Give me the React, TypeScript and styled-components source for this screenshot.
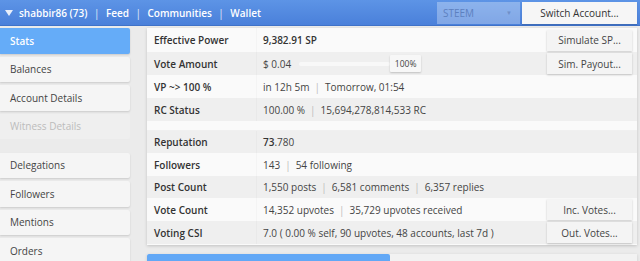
import React from "react";
import styled, { createGlobalStyle } from "styled-components";

const Global = createGlobalStyle`
  html, body { margin: 0; padding: 0; }
  body {
    background: #ebebeb;
    font-family: "Open Sans", "Liberation Sans", sans-serif;
    font-size: 10px;
    color: #333;
    overflow: hidden;
  }
`;

const Header = styled.header`
  height: 26px;
  box-sizing: border-box;
  display: flex;
  align-items: center;
  background: linear-gradient(#5d94e6, #4a80da);
  border-bottom: 1px solid #3f72c8;
  padding: 0 3px 0 4px;
  color: #fff;
`;

const Nav = styled.nav`
  display: flex;
  align-items: center;
  font-size: 10px;
  font-weight: 600;
  flex: 1;
`;

const Caret = styled.span`
  display: inline-block;
  width: 0;
  height: 0;
  border-left: 4.5px solid transparent;
  border-right: 4.5px solid transparent;
  border-top: 6px solid #e8eefa;
  margin: 1px 6px 0 1px;
`;

const Sep = styled.span`
  margin: 0 6.5px;
  font-weight: 400;
  opacity: 0.85;
`;

const Select = styled.div`
  width: 83px;
  height: 22px;
  box-sizing: border-box;
  display: flex;
  align-items: center;
  justify-content: space-between;
  padding: 0 8px 0 6px;
  background: rgba(255, 255, 255, 0.3);
  color: #5d80bf;
  font-size: 10px;
  margin-right: 2px;
`;

const SmallCaret = styled.span`
  font-size: 6px;
  color: #6f8fc8;
`;

const HeaderButton = styled.button`
  width: 115px;
  height: 22px;
  border: none;
  background: #f6f6f6;
  color: #333;
  font-family: inherit;
  font-size: 10px;
  padding: 0;
  box-shadow: 0 1px 1px rgba(0, 0, 0, 0.15);
`;

const Body = styled.div`
  display: flex;
  align-items: flex-start;
  padding-top: 2px;
`;

const Sidebar = styled.aside`
  width: 130px;
  display: flex;
  flex-direction: column;
  flex-shrink: 0;
`;

const SideItem = styled.div<{ $active?: boolean; $disabled?: boolean; $gapAfter?: boolean }>`
  height: 25.5px;
  box-sizing: border-box;
  display: flex;
  align-items: center;
  padding-left: 10px;
  margin-bottom: ${(p) => (p.$gapAfter ? "13.5px" : "3px")};
  border-radius: 0 2px 2px 0;
  font-size: 10px;
  background: ${(p) => (p.$active ? "#65acf8" : p.$disabled ? "#efefef" : "#f5f5f5")};
  color: ${(p) => (p.$active ? "#fff" : p.$disabled ? "#bcbcbc" : "#444")};
  font-weight: ${(p) => (p.$active ? 600 : 400)};
  box-shadow: ${(p) => (p.$disabled ? "none" : "0 1px 2px rgba(0,0,0,0.14)")};
`;

const Main = styled.main`
  margin-left: 17px;
  width: 490px;
  display: flex;
  flex-direction: column;
  gap: 9px;
`;

const Panel = styled.section`
  background: #fafafa;
  box-shadow: 0 1px 3px rgba(0, 0, 0, 0.18);
  padding-bottom: 1px;
`;

const Row = styled.div<{ $shade?: boolean; $h?: number }>`
  height: ${(p) => p.$h ?? 23}px;
  display: flex;
  align-items: center;
  background: ${(p) => (p.$shade ? "#efefef" : "#fafafa")};
`;

const Spacer = styled.div`
  height: 9px;
  background: #fafafa;
  border-bottom: 1px solid #f0f0f0;
`;

const Label = styled.div`
  width: 110px;
  height: 100%;
  box-sizing: border-box;
  display: flex;
  align-items: center;
  padding-left: 7px;
  font-weight: 600;
  color: #333;
  border-right: 1px solid rgba(0, 0, 0, 0.025);
  flex-shrink: 0;
`;

const Value = styled.div<{ $bold?: boolean }>`
  flex: 1;
  display: flex;
  align-items: center;
  padding-left: 6px;
  color: ${(p) => (p.$bold ? "#333" : "#444")};
  font-weight: ${(p) => (p.$bold ? 600 : 400)};
  white-space: nowrap;
`;

const Pipe = styled.span`
  color: #bbb;
  margin: 0 5px;
`;

const Strong = styled.span`
  font-weight: 600;
  color: #333;
`;

const ActionButton = styled.button`
  width: 85px;
  height: 21px;
  margin-right: 5px;
  border: none;
  background: #f4f4f4;
  color: #444;
  font-family: inherit;
  font-size: 10px;
  padding: 0;
  box-shadow: 0 1px 2px rgba(0, 0, 0, 0.2);
  flex-shrink: 0;
`;

const Track = styled.div`
  width: 91px;
  height: 4px;
  margin-left: 8px;
  background: #f8f8f8;
  border-radius: 2px;
`;

const Badge = styled.div`
  height: 17px;
  width: 31px;
  box-sizing: border-box;
  display: flex;
  align-items: center;
  justify-content: center;
  background: #f7f7f7;
  font-size: 8.5px;
  color: #444;
  box-shadow: 0 1px 2px rgba(0, 0, 0, 0.2);
  border-radius: 1px;
`;

const TabsPanel = styled.section`
  height: 40px;
  background: #f2f2f2;
  box-shadow: 0 1px 3px rgba(0, 0, 0, 0.15);
  display: flex;
`;

const Tab = styled.div`
  width: 243px;
  height: 100%;
  background: #62a8f6;
  border-radius: 2px 2px 0 0;
`;

const sidebar = [
  { t: "Stats", active: true },
  { t: "Balances" },
  { t: "Account Details" },
  { t: "Witness Details", disabled: true, gap: true },
  { t: "Delegations" },
  { t: "Followers" },
  { t: "Mentions" },
  { t: "Orders" },
];

export default function App() {
  return (
    <>
      <Global />
      <Header>
        <Nav>
          <Caret />
          <span>shabbir86 (73)</span>
          <Sep>|</Sep>
          <span>Feed</span>
          <Sep>|</Sep>
          <span>Communities</span>
          <Sep>|</Sep>
          <span>Wallet</span>
        </Nav>
        <Select>
          <span>STEEM</span>
          <SmallCaret>▼</SmallCaret>
        </Select>
        <HeaderButton>Switch Account...</HeaderButton>
      </Header>
      <Body>
        <Sidebar>
          {sidebar.map((s) => (
            <SideItem key={s.t} $active={s.active} $disabled={s.disabled} $gapAfter={s.gap}>
              {s.t}
            </SideItem>
          ))}
        </Sidebar>
        <Main>
          <Panel>
            <Row $h={24}>
              <Label>Effective Power</Label>
              <Value $bold>9,382.91 SP</Value>
              <ActionButton>Simulate SP...</ActionButton>
            </Row>
            <Row $shade>
              <Label>Vote Amount</Label>
              <Value>
                $ 0.04
                <Track />
                <Badge>100%</Badge>
              </Value>
              <ActionButton>Sim. Payout...</ActionButton>
            </Row>
            <Row>
              <Label>VP ~&gt; 100 %</Label>
              <Value>
                in 12h 5m<Pipe>|</Pipe>Tomorrow, 01:54
              </Value>
            </Row>
            <Row $shade>
              <Label>RC Status</Label>
              <Value>
                100.00 %<Pipe>|</Pipe>15,694,278,814,533 RC
              </Value>
            </Row>
            <Spacer />
            <Row $shade $h={22}>
              <Label>Reputation</Label>
              <Value>
                <Strong>73</Strong>.780
              </Value>
            </Row>
            <Row>
              <Label>Followers</Label>
              <Value>
                143<Pipe>|</Pipe>54 following
              </Value>
            </Row>
            <Row $shade $h={22}>
              <Label>Post Count</Label>
              <Value>
                1,550 posts<Pipe>|</Pipe>6,581 comments<Pipe>|</Pipe>6,357 replies
              </Value>
            </Row>
            <Row>
              <Label>Vote Count</Label>
              <Value>
                14,352 upvotes<Pipe>|</Pipe>35,729 upvotes received
              </Value>
              <ActionButton>Inc. Votes...</ActionButton>
            </Row>
            <Row $shade>
              <Label>Voting CSI</Label>
              <Value>7.0 ( 0.00 % self, 90 upvotes, 48 accounts, last 7d )</Value>
              <ActionButton>Out. Votes...</ActionButton>
            </Row>
          </Panel>
          <TabsPanel>
            <Tab />
          </TabsPanel>
        </Main>
      </Body>
    </>
  );
}
